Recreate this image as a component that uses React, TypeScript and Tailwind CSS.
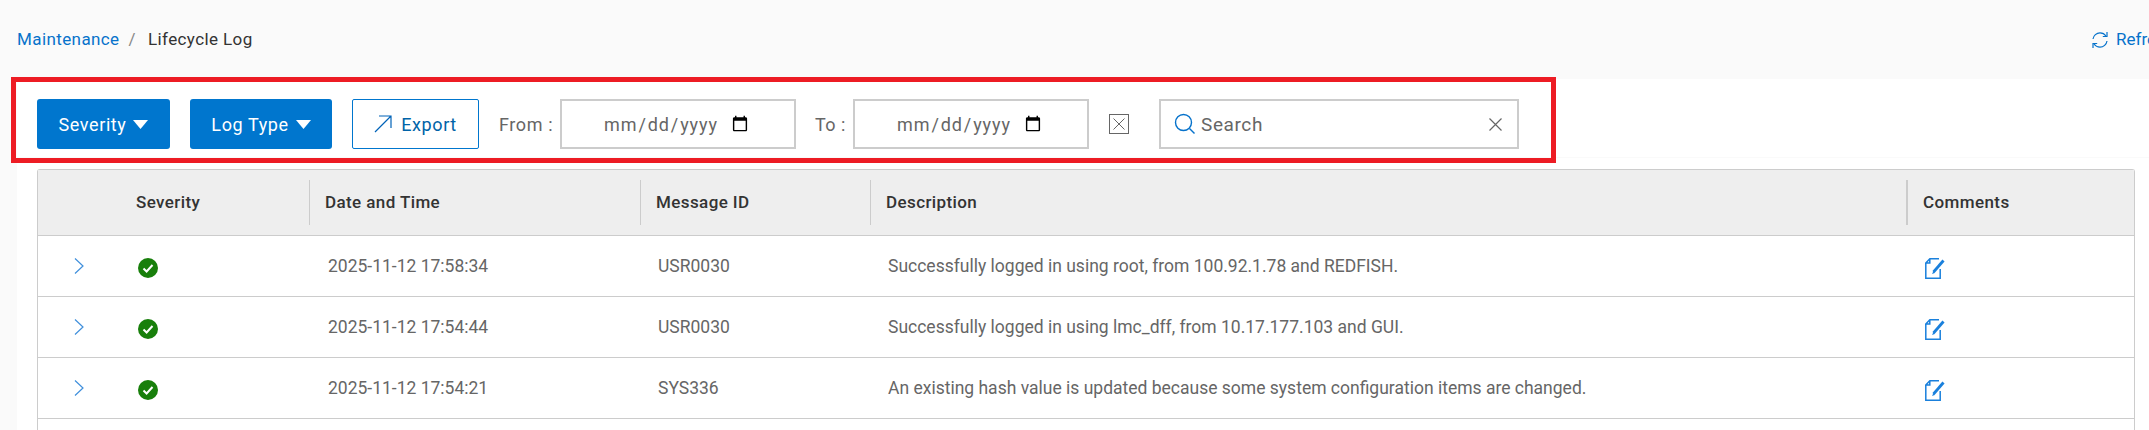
const ROBOTO = "font-['Roboto',sans-serif]";

function Caret() {
  return (
    <svg width="15" height="9" viewBox="0 0 15 9" className="ml-[7px] shrink-0">
      <path d="M0 0H15L7.5 9Z" fill="#ffffff" />
    </svg>
  );
}

function DropButton({ label, width }: { label: string; width: string }) {
  return (
    <button className={`flex h-[50px] ${width} items-center justify-center rounded-[3px] bg-[#0076ce] text-[18px] tracking-[0.6px] text-white`}>
      {label}
      <Caret />
    </button>
  );
}

function DateField() {
  return (
    <input
      type="date"
      className="h-[50px] w-[236px] border-2 border-[#cccccc] bg-white pl-[41px] pr-[43px] text-[18px] tracking-[0.9px] text-[#666666]"
    />
  );
}

function Chevron() {
  return (
    <svg width="10" height="16" viewBox="0 0 10 16" fill="none">
      <path d="M1 0.5L9 8L1 15.5" stroke="#3f8fdc" strokeWidth="1.2" />
    </svg>
  );
}

function Ok() {
  return (
    <svg width="20" height="20" viewBox="0 0 20 20">
      <circle cx="10" cy="10" r="10" fill="#187f0b" />
      <path d="M5.5 10.5L8.6 13.5L14.5 7" fill="none" stroke="#ffffff" strokeWidth="2" />
    </svg>
  );
}

function NoteIcon() {
  return (
    <svg width="20" height="21" viewBox="0 0 20 21" fill="none">
      <path d="M4.5 0.8H14M0.8 5V20.2H15.2V11M0.8 5L4.8 0.8V5Z" stroke="#1a80dc" strokeWidth="1.5" />
      <path d="M18.5 2.5L8.5 14" stroke="#1a80dc" strokeWidth="2.8" />
      <path d="M8.5 13L7 16L9.8 15Z" fill="#1a80dc" />
    </svg>
  );
}

const rows = [
  ["2025-11-12 17:58:34", "USR0030", "Successfully logged in using root, from 100.92.1.78 and REDFISH."],
  ["2025-11-12 17:54:44", "USR0030", "Successfully logged in using lmc_dff, from 10.17.177.103 and GUI."],
  ["2025-11-12 17:54:21", "SYS336", "An existing hash value is updated because some system configuration items are changed."],
];

const cols = "grid grid-cols-[271px_331px_230px_1036px_228px]";

export default function App() {
  return (
    <div className={`relative h-[430px] w-[2149px] overflow-hidden bg-[#fafafa] ${ROBOTO}`}>
      <header className="flex h-[79px] items-center justify-between pl-[17px]">
        <nav className="flex items-center text-[17px] tracking-[0.4px]">
          <span className="text-[#0672cb]">Maintenance</span>
          <span className="ml-[9px] text-[#888888]">/</span>
          <span className="ml-[12px] text-[#333333]">Lifecycle Log</span>
        </nav>
        <div className="flex w-[58px] shrink-0 items-center overflow-hidden whitespace-nowrap text-[17px] text-[#0672cb]">
          <svg width="18" height="18" viewBox="0 0 18 18" fill="none" className="mr-[7px] shrink-0" stroke="#0672cb" strokeWidth="1.2">
            <path d="M2 8C2.5 4.5 5.5 1.8 9 1.8C11.5 1.8 13.6 3 15 5" />
            <path d="M16 1V5.5H11.8" />
            <path d="M16 10C15.5 13.5 12.5 16.2 9 16.2C6.5 16.2 4.4 15 3 13" />
            <path d="M2 17V12.5H6.2" />
          </svg>
          Refresh
        </div>
      </header>

      <main className="ml-[17px] h-[351px] bg-white">
        <div className="flex h-[79px] items-start border-b border-[#fafafa] pl-[20px] pt-[20px]">
          <DropButton label="Severity" width="w-[133px]" />
          <div className="ml-[20px]">
            <DropButton label="Log Type" width="w-[142px]" />
          </div>
          <button className="ml-[20px] flex h-[50px] w-[127px] items-center justify-center rounded-[2px] border border-[#0076ce] text-[18px] tracking-[0.6px] text-[#0063a8]">
            <svg width="18" height="18" viewBox="0 0 18 18" fill="none" stroke="#0063b8" strokeWidth="1.2" className="mr-[9px]">
              <path d="M1 17L17 1M5 1H17V13" />
            </svg>
            Export
          </button>
          <span className="ml-[20px] flex h-[50px] w-[61px] items-center text-[18px] tracking-[0.6px] text-[#666666]">From :</span>
          <DateField />
          <span className="ml-[19px] flex h-[50px] w-[38px] items-center text-[18px] tracking-[0.5px] text-[#666666]">To :</span>
          <DateField />
          <div className="flex h-[50px] items-center">
            <button className="ml-[20px] flex h-[20px] w-[20px] items-center justify-center border border-[#666666]">
              <svg width="14" height="14" viewBox="0 0 14 14" stroke="#666666" strokeWidth="1">
                <path d="M1.5 1.5L12.5 12.5M12.5 1.5L1.5 12.5" />
              </svg>
            </button>
          </div>
          <div className="ml-[30px] flex h-[50px] w-[360px] items-center border-2 border-[#cccccc] pl-[13px] pr-[15px]">
            <svg width="22" height="22" viewBox="0 0 22 22" fill="none" stroke="#0672cb" strokeWidth="1.4" className="mr-[5px] shrink-0">
              <circle cx="9.5" cy="9.5" r="8" />
              <path d="M15.5 15.5L20.5 20.5" />
            </svg>
            <span className="mt-[2px] flex-1 text-[19px] tracking-[0.6px] text-[#666666]">Search</span>
            <svg width="13" height="13" viewBox="0 0 13 13" stroke="#666666" strokeWidth="1.2">
              <path d="M0.5 0.5L12.5 12.5M12.5 0.5L0.5 12.5" />
            </svg>
          </div>
        </div>

        <div className="ml-[20px] mt-[11px] w-[2098px] rounded-t-[3px] border border-b-0 border-[#cccccc]">
          <div className={`${cols} h-[66px] items-center border-b border-[#cccccc] bg-[#eeeeee] text-[17px] font-medium tracking-[0.4px] text-[#333333]`}>
            <div className="pl-[98px]">Severity</div>
            <div className="flex h-[45px] items-center border-l border-[#cccccc] pl-[15px]">Date and Time</div>
            <div className="flex h-[45px] items-center border-l border-[#cccccc] pl-[15px]">Message ID</div>
            <div className="flex h-[45px] items-center border-l border-[#cccccc] pl-[15px]">Description</div>
            <div className="flex h-[45px] items-center border-l-2 border-[#cccccc] pl-[15px]">Comments</div>
          </div>
          {rows.map(([time, id, text]) => (
            <div key={time} className={`${cols} h-[61px] items-center border-b border-[#cccccc] text-[17.5px] text-[#666666]`}>
              <div className="flex items-center pl-[36px]">
                <div className="w-[64px]"><Chevron /></div>
                <div className="mt-[4px]"><Ok /></div>
              </div>
              <div className="pl-[19px]">{time}</div>
              <div className="pl-[18px]">{id}</div>
              <div className="pl-[18px]">{text}</div>
              <div className="mt-[4px] pl-[19px]"><NoteIcon /></div>
            </div>
          ))}
          <div className="h-[20px]" />
        </div>
      </main>

      <div className="pointer-events-none absolute left-[11px] top-[77px] h-[86px] w-[1545px] border-[5px] border-[#ed1c24]" />
    </div>
  );
}
